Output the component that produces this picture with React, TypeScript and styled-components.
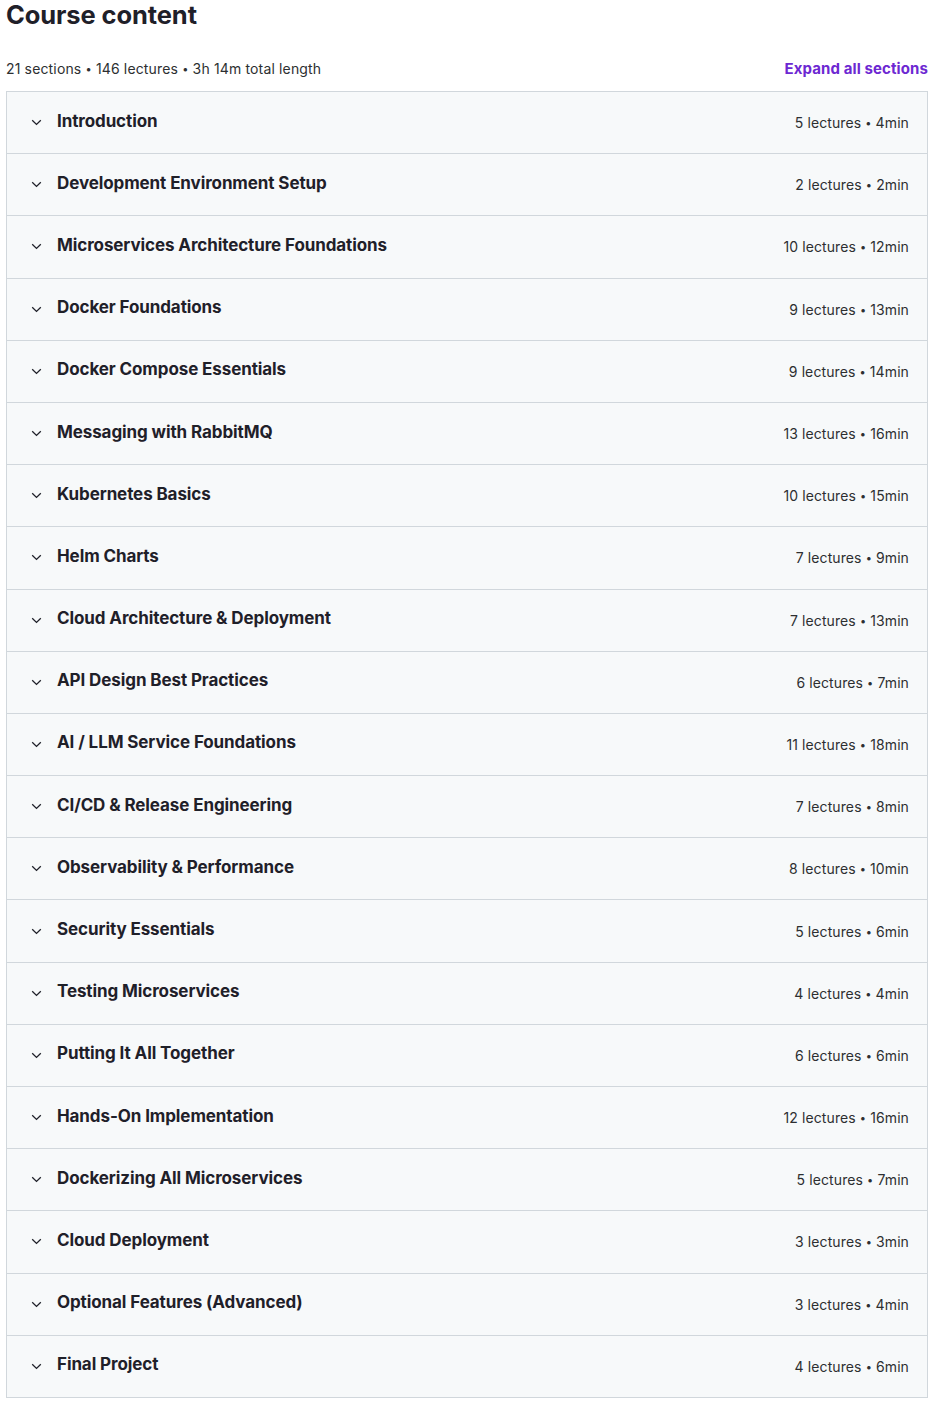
import React from "react";
import styled, { createGlobalStyle } from "styled-components";

const Global = createGlobalStyle`
  html, body { margin: 0; padding: 0; background: #fff; }
  body { font-family: Inter, "Noto Sans", sans-serif; color: #1f2029; }
`;

const Page = styled.div`
  padding: 0 6px;
  width: 922px;
`;

const Title = styled.h2`
  margin: 0;
  font-size: 25.5px;
  line-height: 29px;
  font-weight: 700;
  letter-spacing: -0.1px;
  color: #1f2029;
`;

const Summary = styled.div`
  display: flex;
  justify-content: space-between;
  align-items: center;
  margin-top: 29px;
  height: 20px;
  margin-bottom: 13px;
`;

const Meta = styled.span`
  font-size: 14px;
  color: #2d2f31;
  letter-spacing: 0.15px;
`;

const Expand = styled.button`
  border: 0;
  background: none;
  padding: 0;
  font-family: inherit;
  font-size: 15px;
  font-weight: 700;
  color: #6d28d2;
  letter-spacing: 0.1px;
  cursor: pointer;
`;

const List = styled.div`
  border: 1px solid #d1d7dc;
  border-bottom: 0;
`;

const Row = styled.div`
  display: flex;
  align-items: center;
  height: 61.19px;
  border-bottom: 1px solid #d1d7dc;
  background: #f7f9fa;
  padding: 0 18px 0 22px;
  box-sizing: content-box;
`;

const Chevron = styled.span`
  display: inline-flex;
  width: 14px;
  height: 16px;
  align-items: center;
  justify-content: center;
  margin-right: 14px;
  color: #1f2029;
`;

const RowTitle = styled.span`
  flex: 1;
  font-size: 17px;
  font-weight: 700;
  letter-spacing: -0.1px;
  color: #1f2029;
  margin-top: -4px;
`;

const RowMeta = styled.span`
  font-size: 14px;
  color: #2d2f31;
  letter-spacing: 0.1px;
`;

const Dot = styled.span`
  font-size: 11px;
  vertical-align: 1px;
`;

const sections: [string, number, number][] = [
  ["Introduction", 5, 4],
  ["Development Environment Setup", 2, 2],
  ["Microservices Architecture Foundations", 10, 12],
  ["Docker Foundations", 9, 13],
  ["Docker Compose Essentials", 9, 14],
  ["Messaging with RabbitMQ", 13, 16],
  ["Kubernetes Basics", 10, 15],
  ["Helm Charts", 7, 9],
  ["Cloud Architecture & Deployment", 7, 13],
  ["API Design Best Practices", 6, 7],
  ["AI / LLM Service Foundations", 11, 18],
  ["CI/CD & Release Engineering", 7, 8],
  ["Observability & Performance", 8, 10],
  ["Security Essentials", 5, 6],
  ["Testing Microservices", 4, 4],
  ["Putting It All Together", 6, 6],
  ["Hands-On Implementation", 12, 16],
  ["Dockerizing All Microservices", 5, 7],
  ["Cloud Deployment", 3, 3],
  ["Optional Features (Advanced)", 3, 4],
  ["Final Project", 4, 6],
];

const ChevronIcon = () => (
  <svg width="11" height="7" viewBox="0 0 11 7" fill="none">
    <path d="M1.2 1.2 L5.5 5.4 L9.8 1.2" stroke="currentColor" strokeWidth="1.3" />
  </svg>
);

export default function App() {
  return (
    <Page>
      <Global />
      <Title>Course content</Title>
      <Summary>
        <Meta>
          21 sections <Dot>•</Dot> 146 lectures <Dot>•</Dot> 3h 14m total length
        </Meta>
        <Expand>Expand all sections</Expand>
      </Summary>
      <List>
        {sections.map(([t, l, m]) => (
          <Row key={t}>
            <Chevron>
              <ChevronIcon />
            </Chevron>
            <RowTitle>{t}</RowTitle>
            <RowMeta>
              {l} lectures <Dot>•</Dot> {m}min
            </RowMeta>
          </Row>
        ))}
      </List>
    </Page>
  );
}
